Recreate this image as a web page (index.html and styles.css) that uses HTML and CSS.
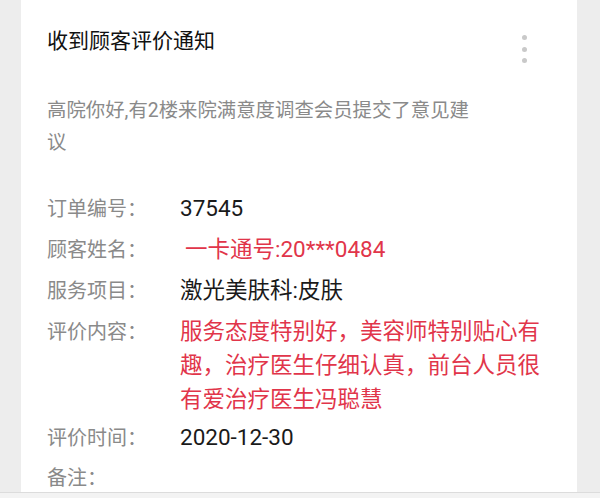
FILE: index.html
```html
<!DOCTYPE html>
<html lang="zh-CN">
<head>
<meta charset="utf-8">
<title>收到顾客评价通知</title>
<link rel="stylesheet" href="styles.css">
</head>
<body>
<div class="card">
  <div class="title">收到顾客评价通知</div>
  <div class="more"><span class="dot"></span><span class="dot"></span><span class="dot"></span></div>
  <div class="desc">高院你好,有2楼来院满意度调查会员提交了意见建议</div>
  <div class="rows">
    <div class="row"><span class="label">订单编号：</span><span class="value">37545</span></div>
    <div class="row"><span class="label">顾客姓名：</span><span class="value red pad">一卡通号:20***0484</span></div>
    <div class="row"><span class="label">服务项目：</span><span class="value">激光美肤科:皮肤</span></div>
    <div class="row multi"><span class="label">评价内容：</span><span class="value red">服务态度特别好，美容师特别贴心有趣，治疗医生仔细认真，前台人员很有爱治疗医生冯聪慧</span></div>
    <div class="row"><span class="label">评价时间：</span><span class="value">2020-12-30</span></div>
    <div class="row"><span class="label">备注：</span><span class="value"></span></div>
  </div>
</div>
<div class="footer"></div>
</body>
</html>
```

FILE: styles.css
```css
html, body {
  margin: 0;
  padding: 0;
}
body {
  background: #ededed;
  font-family: Roboto, "Noto Sans CJK SC", sans-serif;
  width: 600px;
  height: 498px;
  overflow: hidden;
}
.card {
  position: relative;
  box-sizing: border-box;
  margin-left: 21px;
  width: 556px;
  height: 492px;
  background: #ffffff;
  padding: 26px 26px 0 26px;
}
.footer {
  height: 6px;
  border-top: 1px solid #dcdcdc;
  background: #f3f3f3;
}
.title {
  font-size: 21px;
  line-height: 30px;
  color: #111111;
}
.more {
  position: absolute;
  left: 501px;
  top: 35px;
  display: flex;
  flex-direction: column;
  gap: 6.5px;
}
.dot {
  display: block;
  width: 5px;
  height: 5px;
  border-radius: 50%;
  background: #c9c9c9;
}
.desc {
  margin-top: 39px;
  width: 440px;
  font-size: 19.4px;
  line-height: 32px;
  color: #8a8a8a;
}
.rows {
  margin-top: 32px;
  display: flex;
  flex-direction: column;
  gap: 6px;
}
.row {
  display: flex;
  align-items: baseline;
  line-height: 34px;
}
.multi {
  margin-bottom: -2px;
}
.label {
  flex: 0 0 133px;
  font-size: 20px;
  color: #8a8a8a;
}
.value {
  flex: 1;
  font-size: 22.5px;
  color: #1a1a1a;
}
.red {
  color: #e1354a;
}
.pad {
  padding-left: 5px;
}
```
